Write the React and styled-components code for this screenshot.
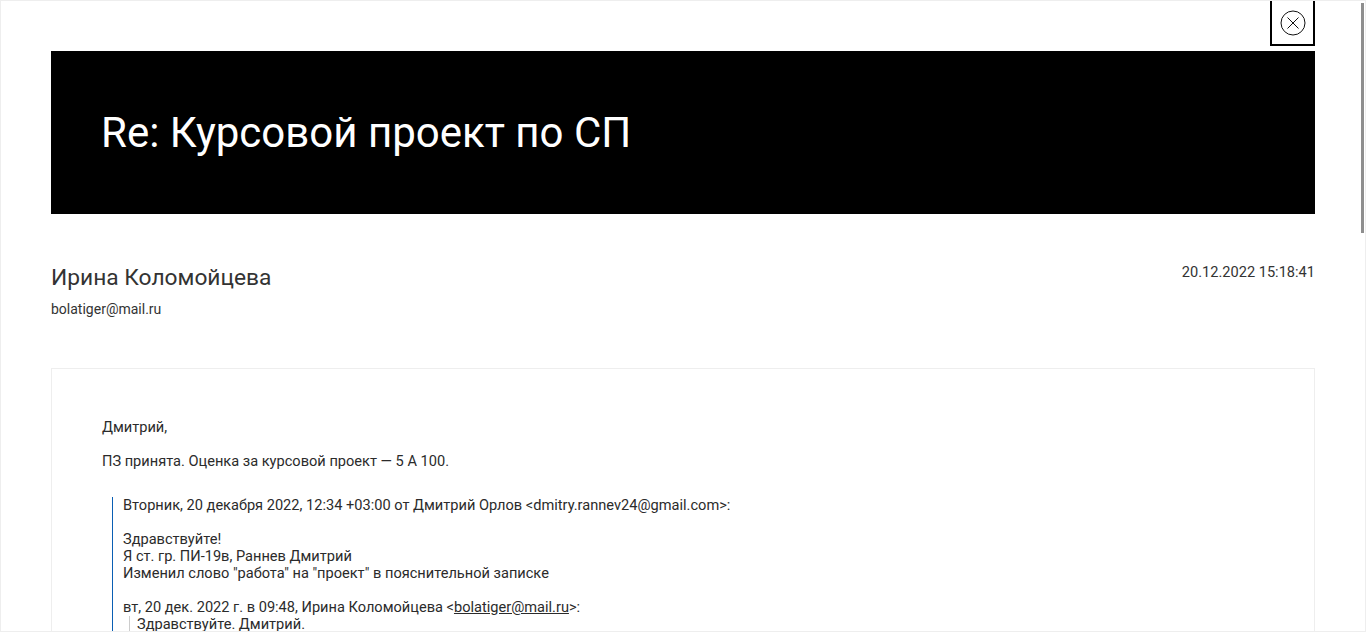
import React from "react";
import styled, { createGlobalStyle } from "styled-components";

const Global = createGlobalStyle`
  html, body { margin: 0; padding: 0; height: 100%; overflow: hidden; background: #fff; }
  * { box-sizing: border-box; }
`;

const Modal = styled.div`
  position: relative;
  height: 632px;
  width: 1366px;
  border: 1px solid #eee;
  background: #fff;
  font-family: Roboto, "Noto Sans", sans-serif;
  color: #333;
  overflow: hidden;
`;

const ScrollThumb = styled.div`
  position: absolute;
  top: 2px;
  right: 1px;
  width: 3px;
  height: 230px;
  background: #8e8e8e;
`;

const Content = styled.div`
  padding: 0 50px 50px 50px;
`;

const CloseRow = styled.div`
  display: flex;
  justify-content: flex-end;
  height: 50px;
`;

const CloseButton = styled.button`
  width: 45px;
  height: 45px;
  padding: 0;
  background: #fff;
  border: 2px solid #000;
  border-top: none;
  display: flex;
  align-items: center;
  justify-content: center;
`;

const Banner = styled.header`
  height: 163px;
  background: #000;
  color: #fff;
  padding: 0 50px;
  display: flex;
  align-items: center;
`;

const Title = styled.h1`
  margin: 0;
  font-size: 42px;
  line-height: 50px;
  font-weight: 400;
`;

const Meta = styled.div`
  display: flex;
  justify-content: space-between;
  padding-top: 50px;
  height: 154px;
`;

const Name = styled.div`
  font-size: 22.75px;
  line-height: 28px;
`;

const Email = styled.div`
  font-size: 14px;
  line-height: 17px;
  margin-top: 9px;
`;

const DateText = styled.div`
  font-size: 14.6px;
  line-height: 17px;
`;

const Letter = styled.section`
  border: 1px solid #eee;
  padding: 50px;
  font-size: 14.6px;
  line-height: 17px;
  color: #2b2b2b;
`;

const Para = styled.p`
  margin: 0 0 17px;
`;

const Quote = styled.blockquote`
  margin: 27px 0 0 10px;
  padding-left: 10px;
  border-left: 1px solid #0a5fb4;
`;

const InnerQuote = styled.blockquote`
  margin: 0 0 0 6px;
  padding-left: 7px;
  border-left: 1px solid #ccc;
`;

const MailLink = styled.a`
  color: inherit;
  text-decoration: underline;
`;

export default function App() {
  return (
    <>
      <Global />
      <Modal>
        <Content>
          <CloseRow>
            <CloseButton aria-label="Закрыть">
              <svg width="26" height="26" viewBox="0 0 26 26" fill="none" stroke="#111" strokeWidth="1">
                <circle cx="13" cy="13" r="12" />
                <path d="M7.5 7.5l11 11M18.5 7.5l-11 11" />
              </svg>
            </CloseButton>
          </CloseRow>
          <Banner>
            <Title>Re: Курсовой проект по СП</Title>
          </Banner>
          <Meta>
            <div>
              <Name>Ирина Коломойцева</Name>
              <Email>bolatiger@mail.ru</Email>
            </div>
            <DateText>20.12.2022 15:18:41</DateText>
          </Meta>
          <Letter>
            <Para>Дмитрий,</Para>
            <Para>ПЗ принята. Оценка за курсовой проект — 5 А 100.</Para>
            <Quote>
              Вторник, 20 декабря 2022, 12:34 +03:00 от Дмитрий Орлов &lt;dmitry.rannev24@gmail.com&gt;:
              <br /><br />
              Здравствуйте!<br />
              Я ст. гр. ПИ-19в, Раннев Дмитрий<br />
              Изменил слово "работа" на "проект" в пояснительной записке
              <br /><br />
              вт, 20 дек. 2022 г. в 09:48, Ирина Коломойцева &lt;<MailLink href="#">bolatiger@mail.ru</MailLink>&gt;:
              <InnerQuote>Здравствуйте. Дмитрий.</InnerQuote>
            </Quote>
          </Letter>
        </Content>
        <ScrollThumb />
      </Modal>
    </>
  );
}
